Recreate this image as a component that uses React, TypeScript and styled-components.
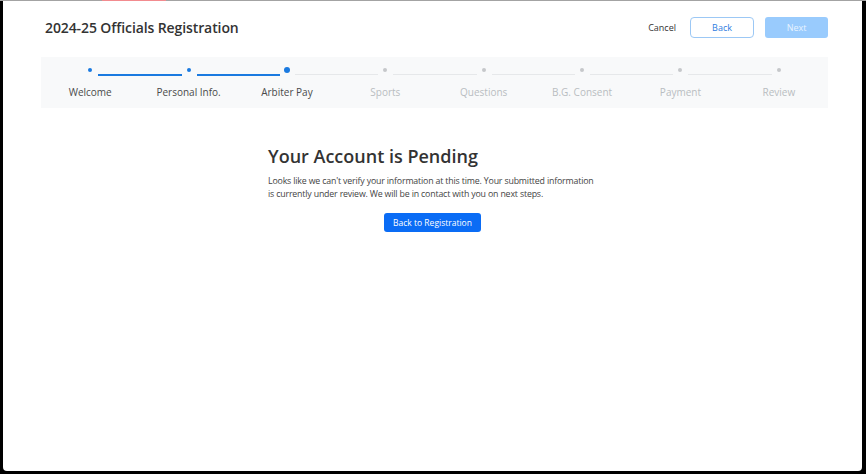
import styled, { createGlobalStyle } from 'styled-components';

const GlobalStyle = createGlobalStyle`
  html, body {
    margin: 0;
    padding: 0;
    background: #000;
  }
  body {
    font-family: "Open Sans", "Liberation Sans", sans-serif;
  }
`;

const STEPS = ['Welcome', 'Personal Info.', 'Arbiter Pay', 'Sports', 'Questions', 'B.G. Consent', 'Payment', 'Review'];
const CURRENT = 2;

const BLUE = '#1a7ae0';

function Stepper() {
  return (
    <StepPanel>
      <Track>
        {STEPS.map((step, i) => (
          <Segment key={step}>
            <Dot $state={i < CURRENT ? 'done' : i === CURRENT ? 'current' : 'todo'} />
            {i < STEPS.length - 1 && <Connector $done={i < CURRENT} />}
          </Segment>
        ))}
      </Track>
      <Labels>
        {STEPS.map((step, i) => (
          <Label key={step} $active={i <= CURRENT}>
            {step}
          </Label>
        ))}
      </Labels>
    </StepPanel>
  );
}

function App() {
  return (
    <Frame>
      <GlobalStyle />
      <TopStrip>
        <StripGray $w={102} />
        <StripRed />
        <StripGray />
      </TopStrip>
      <Page>
        <Header>
          <Title>2024-25 Officials Registration</Title>
          <Actions>
            <CancelLink>Cancel</CancelLink>
            <OutlineButton>Back</OutlineButton>
            <DisabledButton>Next</DisabledButton>
          </Actions>
        </Header>
        <Stepper />
        <Content>
          <Heading>Your Account is Pending</Heading>
          <Message>
            Looks like we can't verify your information at this time. Your submitted information is currently under
            review. We will be in contact with you on next steps.
          </Message>
          <PrimaryButton>Back to Registration</PrimaryButton>
        </Content>
      </Page>
    </Frame>
  );
}

export default App;

const Frame = styled.div`
  width: 866px;
  height: 474px;
  box-sizing: border-box;
  background: #000;
  padding: 0 4px 3px 3px;
  display: flex;
  flex-direction: column;
`;

const TopStrip = styled.div`
  display: flex;
  height: 1px;
  margin-left: -3px;
  margin-right: -4px;
`;

const StripGray = styled.div<{ $w?: number }>`
  background: #a3a3a3;
  ${({ $w }) => ($w ? `width: ${$w}px;` : 'flex: 1;')}
`;

const StripRed = styled.div`
  width: 64px;
  background: #f28b8f;
`;

const Page = styled.div`
  flex: 1;
  background: #fff;
  border-radius: 0 0 4px 4px;
  display: flex;
  flex-direction: column;
`;

const Header = styled.div`
  height: 52px;
  display: flex;
  align-items: center;
  justify-content: space-between;
  padding: 0 34px 0 42px;
`;

const Title = styled.h1`
  margin: 0;
  font-size: 14px;
  font-weight: 600;
  color: #333;
  letter-spacing: -0.1px;
`;

const Actions = styled.div`
  display: flex;
  align-items: center;
`;

const CancelLink = styled.span`
  font-size: 9px;
  color: #333;
  margin-right: 14px;
`;

const OutlineButton = styled.button`
  width: 64px;
  height: 21px;
  box-sizing: border-box;
  border: 1px solid #9cc8f5;
  border-radius: 4px;
  background: #fff;
  color: #2f7de0;
  font-family: inherit;
  font-size: 9px;
  padding: 0;
  margin-right: 11px;
`;

const DisabledButton = styled.button`
  width: 63px;
  height: 21px;
  box-sizing: border-box;
  border: none;
  border-radius: 3px;
  background: #99cbfd;
  color: #e8f3ff;
  font-family: inherit;
  font-size: 9px;
  padding: 0;
`;

const StepPanel = styled.div`
  margin: 4px 34px 0 38px;
  height: 51px;
  background: #f8f9fa;
  display: flex;
  flex-direction: column;
`;

const Track = styled.div`
  display: grid;
  grid-template-columns: repeat(8, 1fr);
  margin-top: 10px;
  height: 12px;
`;

const Segment = styled.div`
  position: relative;
  display: flex;
  justify-content: center;
  align-items: flex-start;
`;

const Dot = styled.div<{ $state: 'done' | 'current' | 'todo' }>`
  border-radius: 50%;
  margin-top: ${({ $state }) => ($state === 'current' ? '0' : '1px')};
  width: ${({ $state }) => ($state === 'current' ? '6px' : '4px')};
  height: ${({ $state }) => ($state === 'current' ? '6px' : '4px')};
  background: ${({ $state }) => ($state === 'todo' ? '#c6c8ca' : BLUE)};
`;

const Connector = styled.div<{ $done: boolean }>`
  position: absolute;
  top: 7px;
  left: calc(50% + 8px);
  width: calc(100% - 15px);
  height: ${({ $done }) => ($done ? '2px' : '1px')};
  background: ${({ $done }) => ($done ? BLUE : '#e6e8ea')};
`;

const Labels = styled.div`
  display: grid;
  grid-template-columns: repeat(8, 1fr);
  margin-top: 6px;
`;

const Label = styled.div<{ $active: boolean }>`
  text-align: center;
  font-size: 10px;
  color: ${({ $active }) => ($active ? '#4a4a4a' : '#b9bdc1')};
`;

const Content = styled.div`
  width: 329px;
  margin: 36px auto 0;
  display: flex;
  flex-direction: column;
  align-items: center;
`;

const Heading = styled.h2`
  align-self: stretch;
  margin: 0;
  font-size: 18px;
  font-weight: 600;
  color: #333;
`;

const Message = styled.p`
  align-self: stretch;
  margin: 7px 0 0;
  font-size: 8.8px;
  line-height: 13px;
  letter-spacing: -0.17px;
  color: #444;
`;

const PrimaryButton = styled.button`
  margin-top: 12px;
  width: 97px;
  height: 19px;
  border: none;
  border-radius: 3px;
  background: #0a6cf5;
  color: #fff;
  font-family: inherit;
  font-size: 8.5px;
  padding: 0;
`;
